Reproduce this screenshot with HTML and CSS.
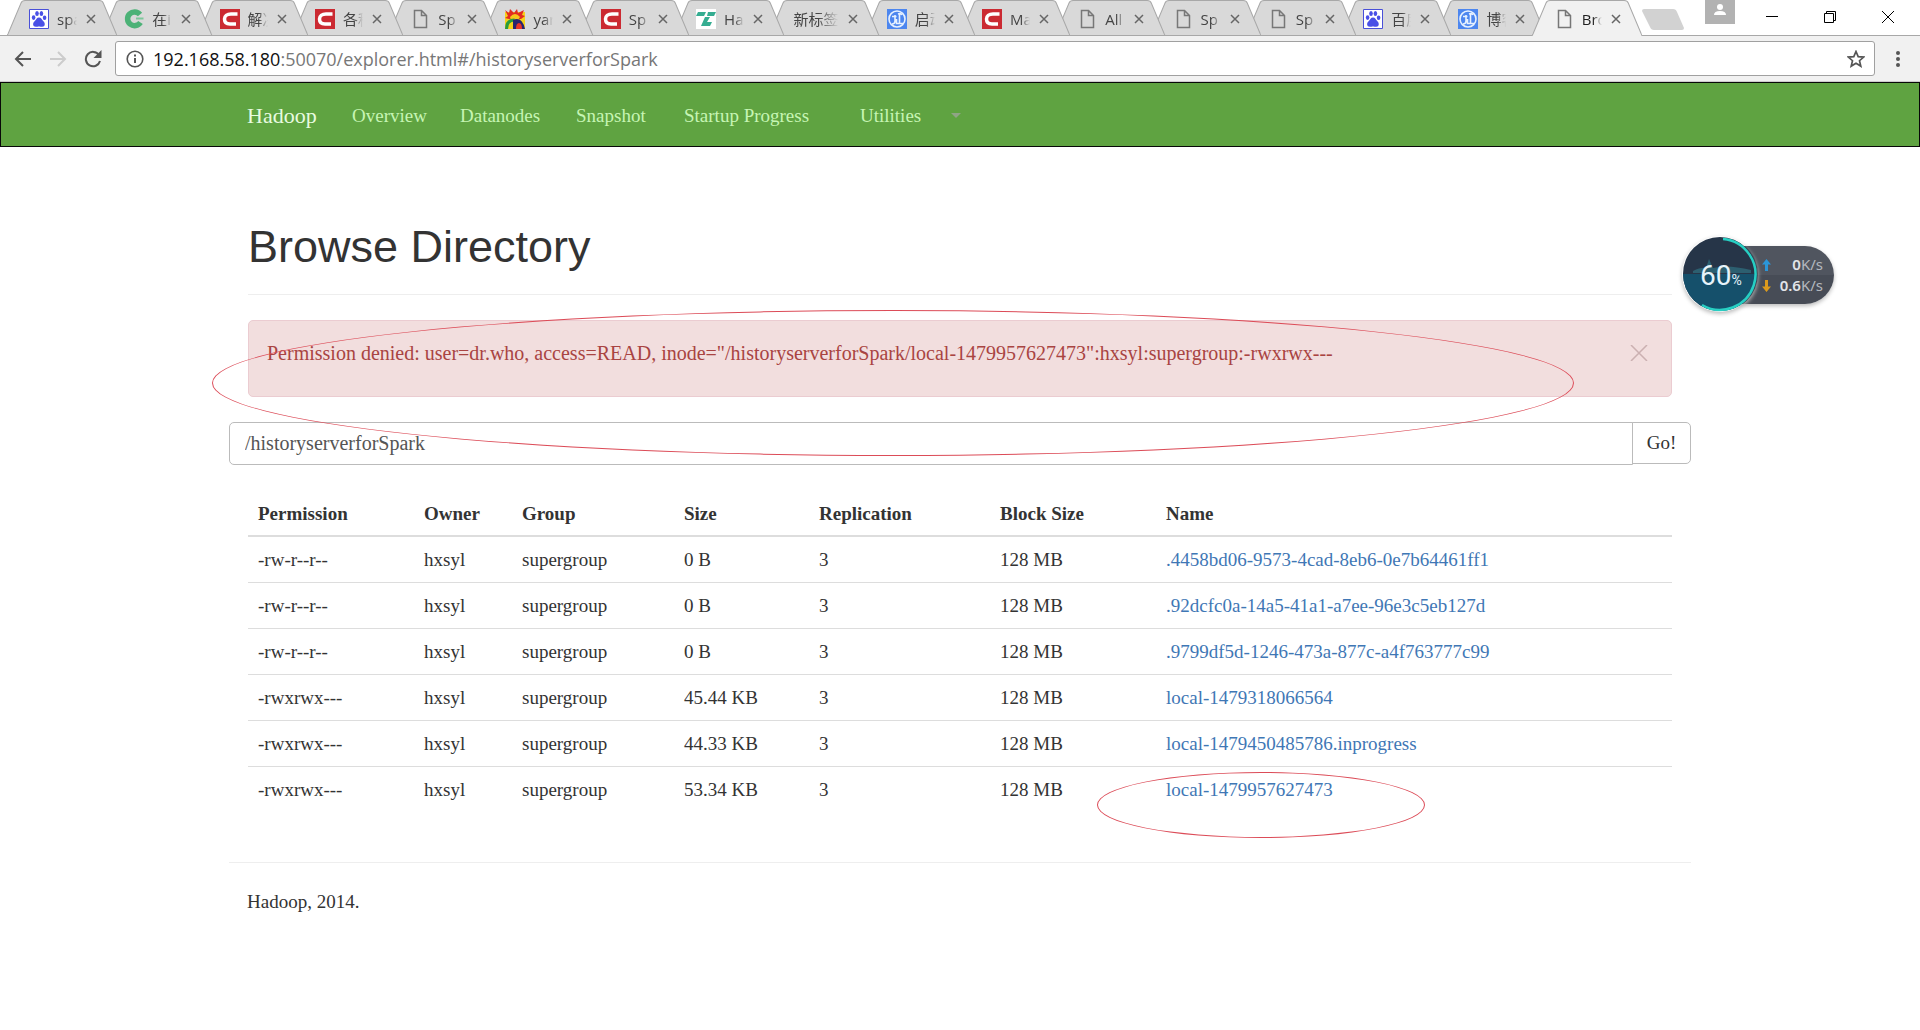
FILE: index.html
```html
<!DOCTYPE html>
<html lang="en">
<head>
<meta charset="utf-8">
<title>Browse Directory</title>
<link rel="stylesheet" href="styles.css">
</head>
<body>
<svg class="defs" aria-hidden="true">
  <symbol id="shape" viewBox="0 0 110 36" preserveAspectRatio="none"><path d="M0 35.5 1 34 14 3Q15 .5 18 .5H92Q95 .5 96 3L109 34 110 35.5"/></symbol>
  <symbol id="x" viewBox="0 0 10 10"><path d="M1 1 9 9M9 1 1 9" fill="none" stroke="#666" stroke-width="1.5"/></symbol>
  <symbol id="paw" viewBox="0 0 20 20"><path fill="#fff" stroke="#4950d8" d="M.5.5h19v19H.5z"/><g fill="#4950e6"><ellipse cx="4.6" cy="8.6" rx="1.8" ry="2.4"/><ellipse cx="8" cy="4.6" rx="1.8" ry="2.5"/><ellipse cx="12.4" cy="4.6" rx="1.8" ry="2.5"/><ellipse cx="15.6" cy="8.8" rx="1.8" ry="2.3"/><path d="M10 8.4c2.4 0 2.6 2.2 4.4 3.8 2 1.8 2 5.4-1.2 5.6-1.4 0-2-.4-3.2-.4s-1.8.4-3.2.4c-3.2-.2-3.4-3.8-1.2-5.600C7.400 10.600 7.600 8.400 10 8.400z"/></g></symbol>
  <symbol id="ring" viewBox="0 0 20 20"><path d="M16 5.500A7 6.800 0 1 0 16.500 13.500" fill="none" stroke="#4cb277" stroke-width="5.500"/><path d="M12 8.500h7.500v2H12z" fill="#7cc79a"/></symbol>
  <symbol id="csdn" viewBox="0 0 20 20"><path fill="#cb2a32" d="M0 0h20v20H0z"/><path d="M17.500 5H11C7 5 4.500 7 4.500 10S6 15 10 15h6" fill="none" stroke="#fff" stroke-width="3.500"/></symbol>
  <symbol id="file" viewBox="0 0 20 20"><path d="M4.500 1.500h7l5 5v12h-12zM11.500 1.500v5h5" fill="none" stroke="#777" stroke-width="1.500"/></symbol>
  <symbol id="fire" viewBox="0 0 20 20"><path fill="#f6d21a" d="M0 3h20v17H0z"/><path fill="#e22b20" d="M0 1l4 3 1-4 4 4 3-4 1 4 6-3-2 5 3 1-4 3H4L0 9l3-2z"/><path fill="#f7c51c" d="M5 8q5-6 10 0l-2 3H6z"/><path d="M1.500 20q0-9 8-9" fill="none" stroke="#279b3c" stroke-width="3"/><path fill="#28246f" d="M8 20V11q9-4 12 9z"/><path fill="#e83428" d="M11 20q0-6 3-6t3 6z"/></symbol>
  <symbol id="teal" viewBox="0 0 20 20"><path fill="#fff" d="M0 0h20v20H0z"/><path fill="#35ad91" d="M2 3h8L8 7H0zM12 3h8l-2 4h-7zM9 8h5l-3 5h5l-2 4H5z"/></symbol>
  <symbol id="kai" viewBox="0 0 20 20"><path fill="#4c86ef" d="M0 0h20v20H0z"/><circle cx="10" cy="10" r="8" fill="none" stroke="#e6f1ff" stroke-width="1.600"/><path d="M5 7.500h4.500M8 6v6q0 3-3 3M11 5q3-1 4 1M12.500 5.500v9M9.500 10v4.500H16" fill="none" stroke="#e6f1ff" stroke-width="1.600"/></symbol>
</svg>

<header class="browser">
  <div class="strip">
    <div class="tabs">
      <div class="tab"><svg class="shape"><use href="#shape"/></svg><svg class="fav"><use href="#paw"/></svg><span class="name">spa</span><svg class="close"><use href="#x"/></svg></div>
      <div class="tab"><svg class="shape"><use href="#shape"/></svg><svg class="fav"><use href="#ring"/></svg><span class="name">在i</span><svg class="close"><use href="#x"/></svg></div>
      <div class="tab"><svg class="shape"><use href="#shape"/></svg><svg class="fav"><use href="#csdn"/></svg><span class="name">解决</span><svg class="close"><use href="#x"/></svg></div>
      <div class="tab"><svg class="shape"><use href="#shape"/></svg><svg class="fav"><use href="#csdn"/></svg><span class="name">各种</span><svg class="close"><use href="#x"/></svg></div>
      <div class="tab"><svg class="shape"><use href="#shape"/></svg><svg class="fav"><use href="#file"/></svg><span class="name">Sp</span><svg class="close"><use href="#x"/></svg></div>
      <div class="tab"><svg class="shape"><use href="#shape"/></svg><svg class="fav"><use href="#fire"/></svg><span class="name">yar</span><svg class="close"><use href="#x"/></svg></div>
      <div class="tab"><svg class="shape"><use href="#shape"/></svg><svg class="fav"><use href="#csdn"/></svg><span class="name">Sp</span><svg class="close"><use href="#x"/></svg></div>
      <div class="tab"><svg class="shape"><use href="#shape"/></svg><svg class="fav"><use href="#teal"/></svg><span class="name">Ha</span><svg class="close"><use href="#x"/></svg></div>
      <div class="tab"><svg class="shape"><use href="#shape"/></svg><span class="name wide">新标签</span><svg class="close"><use href="#x"/></svg></div>
      <div class="tab"><svg class="shape"><use href="#shape"/></svg><svg class="fav"><use href="#kai"/></svg><span class="name">启动</span><svg class="close"><use href="#x"/></svg></div>
      <div class="tab"><svg class="shape"><use href="#shape"/></svg><svg class="fav"><use href="#csdn"/></svg><span class="name">Ma</span><svg class="close"><use href="#x"/></svg></div>
      <div class="tab"><svg class="shape"><use href="#shape"/></svg><svg class="fav"><use href="#file"/></svg><span class="name">All</span><svg class="close"><use href="#x"/></svg></div>
      <div class="tab"><svg class="shape"><use href="#shape"/></svg><svg class="fav"><use href="#file"/></svg><span class="name">Sp</span><svg class="close"><use href="#x"/></svg></div>
      <div class="tab"><svg class="shape"><use href="#shape"/></svg><svg class="fav"><use href="#file"/></svg><span class="name">Sp</span><svg class="close"><use href="#x"/></svg></div>
      <div class="tab"><svg class="shape"><use href="#shape"/></svg><svg class="fav"><use href="#paw"/></svg><span class="name">百度</span><svg class="close"><use href="#x"/></svg></div>
      <div class="tab"><svg class="shape"><use href="#shape"/></svg><svg class="fav"><use href="#kai"/></svg><span class="name">博客</span><svg class="close"><use href="#x"/></svg></div>
      <div class="tab active"><svg class="shape"><use href="#shape"/></svg><svg class="fav"><use href="#file"/></svg><span class="name">Bro</span><svg class="close"><use href="#x"/></svg></div>
    </div>
    <button class="newtab" aria-label="New tab"><svg width="42" height="21" viewBox="0 0 42 21"><path fill="#d2d2d2" d="M2 0h29q3 0 4 3l7 16q0 2-2 2H12q-3 0-4-3L0 2Q0 0 2 0z"/></svg></button>
    <div class="window-buttons">
      <button class="user" aria-label="User"><svg width="30" height="24" viewBox="0 0 30 24"><path fill="#b2b2b2" d="M0 0h30v24H0z"/><circle cx="15" cy="7" r="3" fill="#fff"/><path fill="#fff" d="M9 15q0-4 6-4t6 4z"/></svg></button>
      <button aria-label="Minimise"><svg width="12" height="12"><path d="M0 5.500h12" stroke="#000"/></svg></button>
      <button aria-label="Restore"><svg width="12" height="12"><path d="M.500 2.500h9v9h-9zM2.500 2.500v-2h9v9h-2" fill="none" stroke="#000"/></svg></button>
      <button aria-label="Close"><svg width="12" height="12"><path d="M0 0 12 12M12 0 0 12" stroke="#000"/></svg></button>
    </div>
  </div>
  <div class="toolbar">
    <button aria-label="Back"><svg width="18" height="18"><path d="M17 9H2M9 2 2 9l7 7" fill="none" stroke="#555" stroke-width="2"/></svg></button>
    <button aria-label="Forward"><svg width="18" height="18"><path d="M1 9h15M9 2l7 7-7 7" fill="none" stroke="#ccc" stroke-width="2"/></svg></button>
    <button aria-label="Reload"><svg width="18" height="18"><path d="M15 5A7.200 7.200 0 1 0 16 11" fill="none" stroke="#555" stroke-width="2"/><path fill="#555" d="M17.500 0v8h-8z"/></svg></button>
    <div class="omnibox">
      <svg width="18" height="18"><circle cx="9" cy="9" r="7.800" fill="none" stroke="#555" stroke-width="1.600"/><path d="M9 8v5M9 4.500v2" stroke="#555" stroke-width="2"/></svg>
      <span class="url"><b>192.168.58.180</b>:50070/explorer.html#/historyserverforSpark</span>
      <button aria-label="Bookmark"><svg width="18" height="18"><path d="M9 1.500 11.200 6.600l5.500.5-4.200 3.600 1.300 5.400L9 13.200l-4.800 2.900 1.300-5.400L1.300 7.100l5.500-.5z" fill="none" stroke="#555" stroke-width="1.700"/></svg></button>
    </div>
    <button aria-label="Menu"><svg width="18" height="18"><g fill="#555"><circle cx="9" cy="3" r="2"/><circle cx="9" cy="9" r="2"/><circle cx="9" cy="15" r="2"/></g></svg></button>
  </div>
</header>

<nav class="navbar">
  <div class="nav-inner">
    <a class="brand" href="#">Hadoop</a>
    <a href="#">Overview</a>
    <a href="#">Datanodes</a>
    <a href="#">Snapshot</a>
    <a href="#">Startup Progress</a>
    <a class="menu" href="#">Utilities <span class="caret"></span></a>
  </div>
</nav>

<main class="container">
  <div class="content">
    <h1>Browse Directory</h1>
    <div class="alert" role="alert">
      <span>Permission denied: user=dr.who, access=READ, inode="/historyserverforSpark/local-1479957627473":hxsyl:supergroup:-rwxrwx---</span>
      <button class="dismiss" aria-label="Dismiss"><svg width="18" height="16"><path d="M1 0 17 16M17 0 1 16" stroke="#cbb0b1" stroke-width="1.500"/></svg></button>
    </div>
  </div>
  <form class="path">
    <input type="text" aria-label="Directory" value="/historyserverforSpark">
    <button type="button">Go!</button>
  </form>
  <div class="content">
    <table>
      <colgroup><col class="c-perm"><col class="c-owner"><col class="c-group"><col class="c-size"><col class="c-repl"><col class="c-block"><col></colgroup>
      <thead><tr><th>Permission</th><th>Owner</th><th>Group</th><th>Size</th><th>Replication</th><th>Block Size</th><th>Name</th></tr></thead>
      <tbody>
        <tr><td>-rw-r--r--</td><td>hxsyl</td><td>supergroup</td><td>0 B</td><td>3</td><td>128 MB</td><td><a href="#">.4458bd06-9573-4cad-8eb6-0e7b64461ff1</a></td></tr>
        <tr><td>-rw-r--r--</td><td>hxsyl</td><td>supergroup</td><td>0 B</td><td>3</td><td>128 MB</td><td><a href="#">.92dcfc0a-14a5-41a1-a7ee-96e3c5eb127d</a></td></tr>
        <tr><td>-rw-r--r--</td><td>hxsyl</td><td>supergroup</td><td>0 B</td><td>3</td><td>128 MB</td><td><a href="#">.9799df5d-1246-473a-877c-a4f763777c99</a></td></tr>
        <tr><td>-rwxrwx---</td><td>hxsyl</td><td>supergroup</td><td>45.44 KB</td><td>3</td><td>128 MB</td><td><a href="#">local-1479318066564</a></td></tr>
        <tr><td>-rwxrwx---</td><td>hxsyl</td><td>supergroup</td><td>44.33 KB</td><td>3</td><td>128 MB</td><td><a href="#">local-1479450485786.inprogress</a></td></tr>
        <tr><td>-rwxrwx---</td><td>hxsyl</td><td>supergroup</td><td>53.34 KB</td><td>3</td><td>128 MB</td><td><a href="#">local-1479957627473</a></td></tr>
      </tbody>
    </table>
  </div>
  <footer>Hadoop, 2014.</footer>
  <div class="mark mark-error"></div>
  <div class="mark mark-file"></div>
</main>

<aside class="meter">
  <div class="speeds">
    <div><svg width="9" height="12"><path fill="#2b96d8" d="M4.500 0 9 5.500H6V12H3V5.500H0z"/></svg><span><b>0</b>K/s</span></div>
    <div><svg width="9" height="12"><path fill="#dc9a1c" d="M4.500 12 9 6.500H6V0H3v6.500H0z"/></svg><span><b>0.6</b>K/s</span></div>
  </div>
  <div class="dial">
    <svg width="76" height="76" viewBox="0 0 76 76"><circle cx="38" cy="38" r="37" fill="#263548"/><path fill="#2c5f70" d="M11 35q8-4 13-3l3-9 4 9q14-4 38 2v3H11z"/><path fill="#15506b" d="M1 38h74a37 37 0 0 1-74 0z"/><path d="M41 3A35.500 35.500 0 1 1 20 69" fill="none" stroke="#27cfc3" stroke-width="2.500"/></svg>
    <span class="load">60<small>%</small></span>
  </div>
</aside>
</body>
</html>
```
FILE: styles.css
```css
* { box-sizing: border-box; }
body { margin: 0; background: #fff; color: #333; font: 19px/25px "Liberation Serif", serif; position: relative; }
button { border: 0; padding: 0; background: none; display: flex; }
a { color: #3f77b5; text-decoration: none; }
.defs { position: absolute; width: 0; height: 0; }

/* browser frame */
.strip { display: flex; height: 36px; border-bottom: 1px solid #a8a8a8; }
.tabs { display: flex; flex: 0 1 1635px; min-width: 0; height: 36px; margin-left: 7px; }
.tab { position: relative; z-index: 1; display: flex; align-items: center; flex: 1 1 0; min-width: 0; height: 36px; padding: 2px 0 0 22px; margin-right: -15px; font: 15px/20px "Open Sans", "Noto Sans CJK SC", sans-serif; color: #444; }
.tab:last-child { margin-right: 0; }
.tab:nth-child(1) { z-index: 17; }
.tab:nth-child(2) { z-index: 16; }
.tab:nth-child(3) { z-index: 15; }
.tab:nth-child(4) { z-index: 14; }
.tab:nth-child(5) { z-index: 13; }
.tab:nth-child(6) { z-index: 12; }
.tab:nth-child(7) { z-index: 11; }
.tab:nth-child(8) { z-index: 10; }
.tab:nth-child(9) { z-index: 9; }
.tab:nth-child(10) { z-index: 8; }
.tab:nth-child(11) { z-index: 7; }
.tab:nth-child(12) { z-index: 6; }
.tab:nth-child(13) { z-index: 5; }
.tab:nth-child(14) { z-index: 4; }
.tab:nth-child(15) { z-index: 3; }
.tab:nth-child(16) { z-index: 2; }
.tab.active { z-index: 20; color: #222; }
.shape { position: absolute; inset: 0; z-index: -1; width: 100%; height: 36px; fill: #d9d9d9; stroke: #a8a8a8; }
.tab:not(.active)::after { content: ""; position: absolute; left: 0; right: 0; bottom: 0; height: 1px; background: #a8a8a8; }
.active .shape { fill: #f1f1f1; }
.active::after { content: ""; position: absolute; left: 1px; right: 1px; bottom: 0; height: 1px; background: #f1f1f1; }
.fav { flex: none; width: 20px; height: 20px; }
.name { flex: none; width: 20px; margin: 0 9px 0 8px; overflow: hidden; white-space: nowrap; -webkit-mask-image: linear-gradient(90deg, #000 55%, transparent); mask-image: linear-gradient(90deg, #000 55%, transparent); }
.name.wide { width: 46px; margin-left: 2px; }
.close { flex: none; width: 10px; height: 10px; }
.newtab { margin-top: 9px; }
.window-buttons { display: flex; gap: 46px; margin-left: auto; padding-right: 26px; }
.window-buttons button { padding-top: 11px; }
.window-buttons .user { padding: 0; height: 24px; margin-right: -15px; }
.toolbar { display: flex; align-items: center; gap: 17px; height: 46px; padding: 0 13px 0 14px; background: #f1f1f1; border-bottom: 1px solid #ccc; }
.omnibox { display: flex; flex: 1; align-items: center; gap: 9px; height: 35px; margin-left: -4px; padding: 0 9px 0 10px; background: #fff; border: 1px solid #a0a0a0; border-radius: 3px; }
.url { flex: 1; font: 18px/24px "Open Sans", sans-serif; color: #777; }
.url b { font-weight: 400; color: #111; }
.toolbar > button:last-child { margin-left: -3px; }

/* site navigation */
.navbar { height: 65px; background: #5fa341; border: 1px solid #080808; }
.nav-inner { display: grid; grid-template-columns: 105px 108px 116px 108px 176px 101px; align-items: center; max-width: 1462px; height: 63px; margin: 0 auto; padding: 1px 18px 0; }
.nav-inner a { color: #c6f5b4; white-space: nowrap; }
.nav-inner .brand { font-size: 22px; color: #e8fbe0; }
.menu { display: flex; align-items: center; justify-content: space-between; }
.caret { border: 5px solid transparent; border-top-color: #8fa486; border-bottom: 0; }

/* directory listing */
.container { position: relative; max-width: 1462px; margin: 0 auto; padding-top: 72px; }
.content { padding: 0 19px; }
h1 { margin: 0 0 25px; padding-bottom: 20px; border-bottom: 1px solid #eee; font: 45px/55px "Liberation Sans", sans-serif; }
.alert { display: flex; justify-content: space-between; align-items: flex-start; height: 77px; margin-bottom: 25px; padding: 20px 23px 20px 18px; background: #f2dede; border: 1px solid #ebccd1; border-radius: 5px; color: #a94442; font-size: 20px; }
.dismiss { margin-top: 4px; }
.path { display: flex; align-items: flex-start; font-size: 20px; }
.path input { flex: 1; min-width: 0; height: 43px; padding: 0 15px; border: 1px solid #bbb; border-radius: 5px 0 0 5px; font: inherit; color: #555; }
.path button { justify-content: center; align-items: center; width: 59px; height: 42px; margin-left: -1px; border: 1px solid #bbb; border-radius: 0 5px 5px 0; font-family: inherit; font-size: 19px; color: #333; }
table { width: 100%; margin-top: 26px; border-collapse: collapse; table-layout: fixed; }
th, td { height: 46px; padding: 0 10px; text-align: left; white-space: nowrap; border-top: 1px solid #ddd; }
th { height: 45px; border-top: 0; border-bottom: 2px solid #ddd; }
tbody tr:first-child td { border-top: 0; }
.c-perm { width: 166px; }
.c-owner { width: 98px; }
.c-group { width: 162px; }
.c-size { width: 135px; }
.c-repl { width: 181px; }
.c-block { width: 166px; }
footer { margin-top: 50px; padding: 26px 18px; border-top: 1px solid #eee; }

/* hand-drawn rings round the message and the file */
.mark { position: absolute; border: 1px solid #dc4c58; border-radius: 50%; pointer-events: none; }
.mark-error { left: -17px; top: 163px; width: 1362px; height: 146px; }
.mark-file { left: 868px; top: 625px; width: 328px; height: 66px; }

/* floating load meter */
.meter { position: absolute; top: 236px; right: 86px; display: flex; align-items: center; width: 152px; height: 76px; font: 15px/21px "Noto Sans", sans-serif; }
.speeds { flex: 1; height: 58px; margin: 2px 0 0 38px; padding: 8px 11px 0 42px; border-radius: 0 29px 29px 0; background: linear-gradient(#50555f 50%, #474c56 50%); color: #b4b8be; box-shadow: 0 2px 4px #bbb; }
.speeds div { display: flex; align-items: center; justify-content: space-between; }
.speeds b { font-weight: 600; color: #e2e4e8; }
.dial { position: absolute; left: 0; top: 0; width: 76px; height: 76px; border-radius: 50%; box-shadow: 0 2px 4px #bbb; }
.load { position: absolute; left: 18px; top: 24px; font: 28px/32px "Roboto", sans-serif; color: #e6f3fa; white-space: nowrap; }
.load small { font-size: 14px; }
```
